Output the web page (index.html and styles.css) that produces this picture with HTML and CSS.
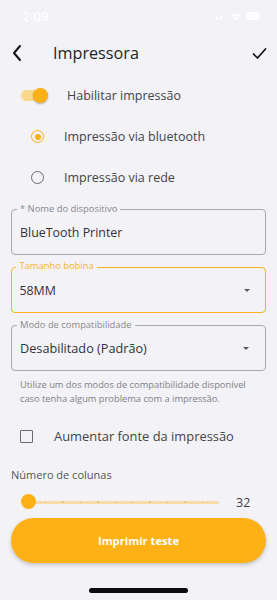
FILE: index.html
```html
<!DOCTYPE html>
<html lang="pt">
<head>
<meta charset="utf-8">
<link rel="stylesheet" href="styles.css">
</head>
<body>
<div class="screen">
  <div class="status">
    <span class="time">2:09</span>
    <span class="status-icons">
      <svg width="10" height="8" viewBox="0 0 10 8"><rect x="1" y="5" width="2" height="3" fill="#fff"/><rect x="5" y="3" width="2" height="5" fill="#fff"/></svg>
      <svg width="12" height="9" viewBox="0 0 12 9"><path d="M1 3.5 A7 7 0 0 1 11 3.5 L9.5 5 A5 5 0 0 0 2.5 5 Z M3.5 6 A3.5 3.5 0 0 1 8.5 6 L6 8.5 Z" fill="#fff"/></svg>
      <svg width="14" height="8" viewBox="0 0 14 8"><rect x="0" y="0" width="12" height="8" rx="1.5" fill="#fff"/><rect x="12.5" y="2.5" width="1.5" height="3" fill="#fff"/></svg>
    </span>
  </div>
  <header class="appbar">
    <svg class="back" width="12" height="18" viewBox="0 0 12 18"><path d="M9 2 L3 9 L9 16" fill="none" stroke="#111" stroke-width="2" stroke-linecap="round" stroke-linejoin="round"/></svg>
    <h1 class="title">Impressora</h1>
    <svg class="check" width="15" height="13" viewBox="0 0 15 13"><path d="M1.5 7 L5.5 11 L13.5 2" fill="none" stroke="#111" stroke-width="1.7" stroke-linecap="round" stroke-linejoin="round"/></svg>
  </header>

  <div class="row switch-row">
    <span class="switch"><span class="track"></span><span class="thumb"></span></span>
    <span class="row-label">Habilitar impressão</span>
  </div>

  <div class="row radio-row first">
    <span class="radio on"><span class="dot"></span></span>
    <span class="row-label">Impressão via bluetooth</span>
  </div>
  <div class="row radio-row">
    <span class="radio"></span>
    <span class="row-label">Impressão via rede</span>
  </div>

  <div class="field">
    <span class="field-label">* Nome do dispositivo</span>
    <span class="field-value">BlueTooth Printer</span>
  </div>
  <div class="field focused">
    <span class="field-label">Tamanho bobina</span>
    <span class="field-value">58MM</span>
    <span class="caret"></span>
  </div>
  <div class="field">
    <span class="field-label">Modo de compatibilidade</span>
    <span class="field-value big">Desabilitado (Padrão)</span>
    <span class="caret"></span>
  </div>
  <p class="helper">Utilize um dos modos de compatibilidade disponível caso tenha algum problema com a impressão.</p>

  <div class="row check-row">
    <span class="checkbox"></span>
    <span class="row-label big">Aumentar fonte da impressão</span>
  </div>

  <div class="cols-label">Número de colunas</div>
  <div class="slider-row">
    <div class="slider">
      <span class="slider-track">
        <i></i><i></i><i></i><i></i><i></i><i></i><i></i><i></i><i></i><i></i>
      </span>
      <span class="slider-thumb"></span>
    </div>
    <span class="slider-value">32</span>
  </div>

  <button class="btn">Imprimir teste</button>

  <div class="home"><span></span></div>
</div>
</body>
</html>
```
FILE: styles.css
```css
* { box-sizing: border-box; }
html, body { margin: 0; padding: 0; }
body {
  background: #f2f2f7;
  font-family: "Open Sans", "Liberation Sans", sans-serif;
  color: #3d3d40;
  width: 277px;
  height: 600px;
  overflow: hidden;
}
.screen { width: 277px; height: 600px; display: flex; flex-direction: column; }

.status {
  height: 30px;
  display: flex;
  justify-content: space-between;
  align-items: center;
  padding: 2px 16px 0 22px;
}
.time { color: #fff; font-family: "Inter", sans-serif; font-weight: 600; font-size: 12px; }
.status-icons { display: flex; gap: 5px; align-items: center; }

.appbar {
  height: 46px;
  display: flex;
  align-items: center;
  padding: 0 10px 0 11px;
}
.back { flex: none; }
.title {
  margin: 0 0 0 30px;
  font-size: 16.2px;
  font-weight: 500;
  color: #1f1f22;
  flex: 1;
}
.check { flex: none; }

.row { display: flex; align-items: center; }
.row-label { font-size: 12.5px; color: #444448; }
.row-label.big { font-size: 12.9px; }

.switch-row { height: 38px; padding-left: 21px; }
.switch { position: relative; width: 27px; height: 16px; margin-right: 19px; }
.track { position: absolute; left: 0; top: 3px; width: 24px; height: 11px; border-radius: 6px; background: #f9d98c; }
.thumb { position: absolute; left: 12px; top: 1px; width: 15px; height: 15px; border-radius: 50%; background: #fdaf16; box-shadow: 0 1px 2px rgba(0,0,0,0.3); }

.radio-row { height: 41px; padding-left: 31px; }
.radio-row.first { margin-top: 2px; }
.radio {
  width: 13px; height: 13px; border-radius: 50%;
  border: 1.7px solid #6b6b6e;
  margin-right: 20px;
  display: flex; align-items: center; justify-content: center;
}
.radio.on { border-color: #fdaf16; }
.radio .dot { width: 6px; height: 6px; border-radius: 50%; background: #fdaf16; }

.field {
  position: relative;
  margin: 11px 11px 0 11px;
  height: 46px;
  border: 1px solid #a9a9ad;
  border-radius: 4px;
  display: flex;
  align-items: center;
  padding: 0 8px;
}
.field:first-of-type { margin-top: 13px; }
.field + .field { margin-top: 12px; }
.field.focused { border: 1.6px solid #fdb41c; padding: 0 7.4px; }
.field-label {
  position: absolute;
  top: -7px;
  left: 5px;
  padding: 0 3px;
  background: #f2f2f7;
  font-size: 9.4px;
  line-height: 12px;
  color: #8a8a8e;
}
.field.focused .field-label { color: #fbb32a; left: 4.4px; top: -7.6px; }
.field-value { font-size: 12.4px; color: #333336; flex: 1; }
.field-value.big { font-size: 12.7px; }
.caret {
  width: 0; height: 0;
  border-left: 3.5px solid transparent;
  border-right: 3.5px solid transparent;
  border-top: 3.5px solid #5a5a5e;
  margin-right: 8px;
}

.helper {
  margin: 7px 16px 0 20px;
  font-size: 9.3px;
  line-height: 14px;
  color: #808084;
}

.check-row { height: 30px; padding-left: 20px; margin-top: 15px; }
.checkbox { width: 13px; height: 13px; border: 1.7px solid #6b6b6e; border-radius: 1px; margin-right: 21px; }

.cols-label { margin: 16px 0 0 11px; font-size: 11px; color: #55555a; }

.slider-row { display: flex; align-items: center; height: 26px; padding-left: 21px; margin-top: 7px; }
.slider { position: relative; width: 198px; height: 16px; }
.slider-track {
  position: absolute; left: 8px; right: 0; top: 6.5px; height: 3px;
  background: #f7dcaa; border-radius: 2px;
  display: flex; justify-content: space-evenly; align-items: center;
}
.slider-track i { display: block; width: 1.5px; height: 1.5px; background: #e9c27a; border-radius: 50%; }
.slider-thumb {
  position: absolute; left: 0; top: 0;
  width: 15px; height: 15px; border-radius: 50%; background: #fdaf16;
}
.slider-value { margin-left: 17px; font-size: 12.5px; color: #3d3d40; }

.btn {
  margin: 3px 11px 0 11px;
  height: 45px;
  border: none;
  border-radius: 23px;
  background: #fdb116;
  color: #fff;
  font-family: "Open Sans", sans-serif;
  font-weight: 700;
  font-size: 11.2px;
  box-shadow: 0 2px 4px rgba(0,0,0,0.2);
}

.home { flex: 1; display: flex; align-items: flex-end; justify-content: center; padding-bottom: 7px; }
.home span { width: 99px; height: 5px; border-radius: 3px; background: #0c0c0e; }
```
